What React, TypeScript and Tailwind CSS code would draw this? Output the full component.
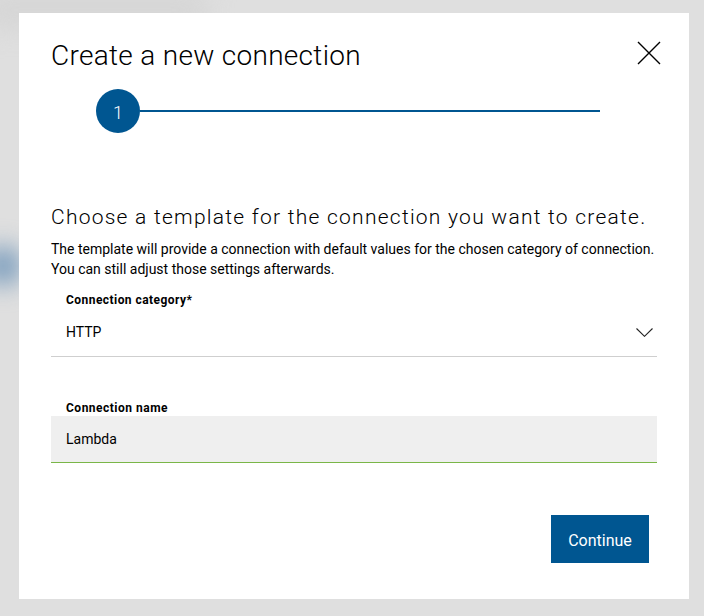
import React from "react";

function CloseIcon() {
  return (
    <svg width="24" height="24" viewBox="0 0 24 24" fill="none" stroke="#000" strokeWidth="1.4">
      <path d="M1 1L23 23M23 1L1 23" />
    </svg>
  );
}

function Chevron() {
  return (
    <svg width="17" height="9" viewBox="0 0 17 9" fill="none" stroke="#222" strokeWidth="1.1">
      <path d="M0.5 0.5L8.5 8.3L16.5 0.5" />
    </svg>
  );
}

export default function App() {
  return (
    <div
      className="relative h-[616px] w-[704px] overflow-hidden bg-[#dfdfdf] pt-[13px] pl-[19px]"
      style={{ fontFamily: "Roboto, 'Noto Sans', sans-serif" }}
    >
      {/* blurred page behind the modal */}
      <div className="absolute left-[-20px] top-[-10px] h-[40px] w-[230px] rounded-full bg-[#d6d6d6] blur-md" />
      <div className="absolute left-[-16px] top-[246px] h-[40px] w-[38px] rounded-full bg-[#7b9dbd] blur-md" />

      <div className="relative flex h-[586px] w-[670px] flex-col bg-white px-8 pt-[25px] text-black">
        <div className="flex items-start justify-between">
          <h1 className="text-[28px] leading-[36px] font-light tracking-[0.3px]">
            Create a new connection
          </h1>
          <button className="mt-[3px] mr-[-4px]">
            <CloseIcon />
          </button>
        </div>

        <div className="mt-[15px] ml-[45px] flex items-center">
          <div className="flex h-[44px] w-[44px] items-center justify-center rounded-full bg-[#005691] pt-[3px] text-[18px] font-light text-white">
            1
          </div>
          <div className="h-[2px] w-[460px] bg-[#005691]" />
        </div>

        <h2 className="mt-[70px] whitespace-nowrap text-[21px] leading-[28px] font-light tracking-[1.25px]">
          Choose a template for the connection you want to create.
        </h2>
        <p className="mt-[8px] whitespace-nowrap text-[14px] leading-[20px]">
          The template will provide a connection with default values for the chosen category of connection.
          <br />
          You can still adjust those settings afterwards.
        </p>

        <div className="mt-[13px]">
          <div className="pl-[15px] text-[12px] leading-[16px] font-bold tracking-[0.45px]">Connection category*</div>
          <div className="flex h-[49px] items-center justify-between border-b border-[#cfcfcf] pl-[15px] pr-[4px]">
            <span className="text-[14px] leading-[20px]">HTTP</span>
            <Chevron />
          </div>
        </div>

        <div className="mt-[43px]">
          <div className="pl-[15px] text-[12px] leading-[16px] font-bold tracking-[0.5px]">Connection name</div>
          <div className="flex h-[47px] items-center border-b border-[#7ab648] bg-[#efefef] pl-[15px]">
            <span className="text-[14px] leading-[20px]">Lambda</span>
          </div>
        </div>

        <div className="mt-[52px] flex justify-end pr-[8px]">
          <button className="h-[48px] w-[98px] bg-[#005691] pt-[3px] text-[16px] text-white">Continue</button>
        </div>
      </div>
    </div>
  );
}
